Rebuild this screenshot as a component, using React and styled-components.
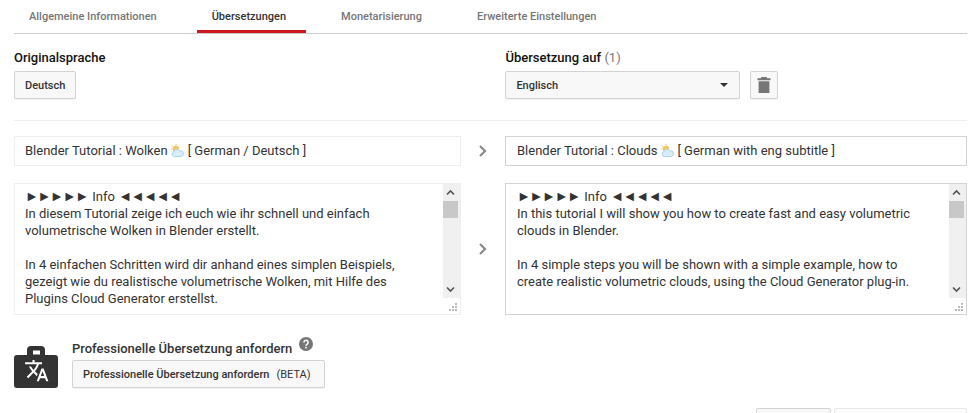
import React from 'react';
import styled, { createGlobalStyle } from 'styled-components';

const Global = createGlobalStyle`
  html, body { margin: 0; padding: 0; background: #fff; overflow: hidden; }
  body { font-family: Roboto, "Noto Sans", Arial, sans-serif; color: #333; }
`;

const Page = styled.div`
  width: 976px;
  height: 413px;
  padding: 0 9px 0 14px;
  box-sizing: border-box;
  overflow: hidden;
`;
const Tabs = styled.div`
  display: flex;
  gap: 20px;
  height: 34px;
  box-sizing: border-box;
  border-bottom: 1px solid #ccc;
`;
const Tab = styled.div`
  height: 33px;
  box-sizing: border-box;
  padding: 10px 20px 0 15px;
  font-size: 11px;
  line-height: 13px;
  font-weight: 500;
  color: ${p => (p.$active ? '#333' : '#767676')};
  border-bottom: 3px solid ${p => (p.$active ? '#cc181e' : 'transparent')};
`;
const Header = styled.div`
  display: grid;
  grid-template-columns: 447px 44.4px 461.6px;
  height: 87px;
  box-sizing: border-box;
  padding-top: 16px;
  border-bottom: 1px solid #eee;
`;
const Col = styled.div`
  grid-column: ${p => p.$col};
  display: flex;
  flex-direction: column;
  align-items: flex-start;
`;
const Label = styled.div`
  font-size: 13px;
  line-height: 15px;
  font-weight: 500;
  color: #111;
  margin-bottom: 6px;
`;
const Count = styled.span`
  font-weight: 400;
  color: #767676;
`;
const Controls = styled.div`
  display: flex;
  gap: 10px;
`;
const Button = styled.div`
  height: 28px;
  box-sizing: border-box;
  display: flex;
  align-items: center;
  justify-content: ${p => (p.$center ? 'center' : 'space-between')};
  padding: ${p => p.$pad || '0 10px'};
  width: ${p => p.$w || 'auto'};
  background: #f8f8f8;
  border: 1px solid #d3d3d3;
  border-radius: 2px;
  box-shadow: 0 1px 0 rgba(0, 0, 0, 0.05);
  font-size: 11px;
  font-weight: 500;
  color: #333;
`;
const Caret = styled.span`
  width: 0;
  height: 0;
  border-left: 4px solid transparent;
  border-right: 4px solid transparent;
  border-top: 4px solid #333;
  margin-right: 1px;
`;
const RowGrid = styled.div`
  display: grid;
  grid-template-columns: 447px 44px 462px;
  margin-top: ${p => p.$top};
`;
const TitleField = styled.div`
  height: 30px;
  box-sizing: border-box;
  border: 1px solid ${p => (p.$strong ? '#d3d3d3' : '#eee')};
  padding: 0 10px 1px ${p => (p.$strong ? '11px' : '10px')};
  display: flex;
  align-items: center;
  gap: 3.5px;
  font-size: 13px;
  color: #333;
  white-space: pre;
`;
const ArrowCell = styled.div`
  display: flex;
  align-items: center;
  justify-content: center;
  padding-right: 1px;
`;
const TextBox = styled.div`
  position: relative;
  height: 132px;
  box-sizing: border-box;
  border: 1px solid ${p => (p.$strong ? '#d3d3d3' : '#eee')};
  display: flex;
  overflow: hidden;
`;
const TextBody = styled.div`
  flex: 1;
  padding: 4px 10px 0 ${p => (p.$strong ? '11px' : '10px')};
  font-size: 13px;
  line-height: 17px;
  color: #333;
`;
const TextLine = styled.div`
  min-height: 17px;
  height: 17px;
  white-space: nowrap;
`;
const Marks = styled.span`
  font-family: "Liberation Sans", sans-serif;
  font-size: 14px;
  word-spacing: -5.2px;
  color: #333;
`;
const Rail = styled.div`
  width: 17px;
  height: 114px;
  background: #f0f0f0;
  display: flex;
  flex-direction: column;
  align-items: flex-start;
  justify-content: space-between;
  flex: none;
`;
const RailEnd = styled.div`
  width: 15px;
  height: 17px;
  display: flex;
  align-items: center;
  justify-content: center;
`;
const Thumb = styled.div`
  width: 15px;
  height: 17px;
  background: #c8c8c8;
`;
const RailTop = styled.div``;
const Grip = styled.svg`
  position: absolute;
  right: 2px;
  bottom: 2px;
`;
const Pro = styled.div`
  display: flex;
  gap: 14px;
  margin-top: 24px;
  align-items: flex-start;
`;
const BagWrap = styled.div`
  width: 44px;
  padding-top: 7px;
  display: flex;
`;
const ProBody = styled.div`
  display: flex;
  flex-direction: column;
  align-items: flex-start;
`;
const ProTitle = styled.div`
  display: flex;
  align-items: flex-start;
  gap: 7px;
  font-size: 13px;
  line-height: 15px;
  font-weight: 500;
  color: #333;
  margin: 2px 0 4px;
  height: 15px;
`;
const Help = styled.svg`
  margin-top: -4px;
`;
const Beta = styled.span`
  font-weight: 400;
  margin-left: 7px;
`;
const Footer = styled.div`
  display: flex;
  justify-content: flex-end;
  gap: 3px;
  margin-top: 20px;
`;
const FooterBtn = styled.div`
  height: 28px;
  width: ${p => p.$w};
  box-sizing: border-box;
  background: ${p => (p.$light ? '#fdfdfd' : '#f8f8f8')};
  border: 1px solid ${p => (p.$light ? '#e8e8e8' : '#d3d3d3')};
  border-radius: 2px;
`;

const Chevron = () => (
  <svg width="10" height="14" viewBox="0 0 10 14">
    <path d="M2 2l5 5-5 5" fill="none" stroke="#8a8a8a" strokeWidth="2.2" />
  </svg>
);
const CloudEmoji = () => (
  <svg width="13" height="14" viewBox="0 0 13 14">
    <circle cx="5" cy="5" r="3.2" fill="#f7c65c" />
    <path d="M1 1.500l1.500 1.500M5 0v1.500M0 5h1.500" stroke="#f7c65c" strokeWidth="1" />
    <path d="M3.200 12.500a2.400 2.400 0 0 1-.3-4.700 3.200 3.200 0 0 1 6-.9 2.800 2.800 0 0 1 1.300 5.600z" fill="#d9ecfa" stroke="#a7d3f2" strokeWidth="1" />
  </svg>
);
const Up = () => (
  <svg width="9" height="7" viewBox="0 0 9 7"><path d="M1 5.500l3.500-3.500 3.500 3.500" fill="none" stroke="#555" strokeWidth="1.700" /></svg>
);
const Down = () => (
  <svg width="9" height="7" viewBox="0 0 9 7"><path d="M1 1.500l3.500 3.500 3.500-3.500" fill="none" stroke="#555" strokeWidth="1.700" /></svg>
);
const GripIcon = () => (
  <Grip width="9" height="9" viewBox="0 0 9 9">
    <path d="M6 0h2v2H6zM3 3h2v2H3zM6 3h2v2H6zM0 6h2v2H0zM3 6h2v2H3zM6 6h2v2H6z" fill="#bbb" />
  </Grip>
);
const Trash = () => (
  <svg width="14" height="16" viewBox="0 0 14 16">
    <path d="M4.500 0h5l.8 1.200H13.500v2H.5v-2h3.200zM1.600 4.200h10.800V16H1.600z" fill="#767676" />
  </svg>
);
const Bag = () => (
  <svg width="44" height="42" viewBox="0 0 44 42">
    <path d="M3 9h10V4a4 4 0 0 1 4-4h10a4 4 0 0 1 4 4v5h10a3 3 0 0 1 3 3v27a3 3 0 0 1-3 3H3a3 3 0 0 1-3-3V12a3 3 0 0 1 3-3zM19 4.500v4h7v-4z" fill="#333" fillRule="evenodd" />
    <g transform="translate(10 12) scale(1.06)">
      <path fill="#fff" d="M12.870 15.070l-2.540-2.510.03-.03c1.740-1.940 2.980-4.170 3.710-6.530H17V4h-7V2H8v2H1v1.990h11.170C11.500 7.920 10.440 9.750 9 11.350 8.070 10.320 7.300 9.190 6.690 8h-2c.73 1.630 1.730 3.170 2.980 4.560l-5.090 5.020L4 19l5-5 3.110 3.110.76-2.040zM18.500 10h-2L12 22h2l1.120-3h4.750L21 22h2l-4.500-12zm-2.620 7l1.620-4.330L19.120 17h-3.240z" />
    </g>
  </svg>
);
const HelpIcon = () => (
  <Help width="14" height="14" viewBox="0 0 14 14">
    <circle cx="7" cy="7" r="7" fill="#767676" />
    <path d="M4.900 5.400a2.100 2.100 0 1 1 3.300 1.700c-.8.500-1.200.9-1.200 1.700" fill="none" stroke="#fff" strokeWidth="1.500" />
    <rect x="6.200" y="9.800" width="1.600" height="1.600" fill="#fff" />
  </Help>
);

const Scrollbar = () => (
  <Rail>
    <RailTop>
      <RailEnd><Up /></RailEnd>
      <Thumb />
    </RailTop>
    <RailEnd><Down /></RailEnd>
  </Rail>
);

const InfoLine = () => (
  <TextLine>
    <Marks>► ► ► ► ►</Marks> Info <Marks>◄ ◄ ◄ ◄ ◄</Marks>
  </TextLine>
);

const german = [
  'In diesem Tutorial zeige ich euch wie ihr schnell und einfach',
  'volumetrische Wolken in Blender erstellt.',
  '',
  'In 4 einfachen Schritten wird dir anhand eines simplen Beispiels,',
  'gezeigt wie du realistische volumetrische Wolken, mit Hilfe des',
  'Plugins Cloud Generator erstellst.',
];
const english = [
  'In this tutorial I will show you how to create fast and easy volumetric',
  'clouds in Blender.',
  '',
  'In 4 simple steps you will be shown with a simple example, how to',
  'create realistic volumetric clouds, using the Cloud Generator plug-in.',
];

export default function App() {
  return (
    <Page>
      <Global />
      <Tabs>
        <Tab>Allgemeine Informationen</Tab>
        <Tab $active>Übersetzungen</Tab>
        <Tab>Monetarisierung</Tab>
        <Tab>Erweiterte Einstellungen</Tab>
      </Tabs>
      <Header>
        <Col $col={1}>
          <Label>Originalsprache</Label>
          <Button>Deutsch</Button>
        </Col>
        <Col $col={3}>
          <Label>Übersetzung auf <Count>(1)</Count></Label>
          <Controls>
            <Button $w="235px">Englisch<Caret /></Button>
            <Button $w="28px" $center $pad="0"><Trash /></Button>
          </Controls>
        </Col>
      </Header>
      <RowGrid $top="15px">
        <TitleField>Blender Tutorial : Wolken<CloudEmoji />[ German / Deutsch ]</TitleField>
        <ArrowCell><Chevron /></ArrowCell>
        <TitleField $strong>Blender Tutorial : Clouds<CloudEmoji />[ German with eng subtitle ]</TitleField>
      </RowGrid>
      <RowGrid $top="17px">
        <TextBox>
          <TextBody>
            <InfoLine />
            {german.map((t, i) => <TextLine key={i}>{t}</TextLine>)}
          </TextBody>
          <Scrollbar />
          <GripIcon />
        </TextBox>
        <ArrowCell><Chevron /></ArrowCell>
        <TextBox $strong>
          <TextBody $strong>
            <InfoLine />
            {english.map((t, i) => <TextLine key={i}>{t}</TextLine>)}
          </TextBody>
          <Scrollbar />
          <GripIcon />
        </TextBox>
      </RowGrid>
      <Pro>
        <BagWrap><Bag /></BagWrap>
        <ProBody>
          <ProTitle>Professionelle Übersetzung anfordern <HelpIcon /></ProTitle>
          <Button $pad="0 13px 0 10px">Professionelle Übersetzung anfordern<Beta>(BETA)</Beta></Button>
        </ProBody>
      </Pro>
      <Footer>
        <FooterBtn $w="75px" />
        <FooterBtn $w="133px" $light />
      </Footer>
    </Page>
  );
}
